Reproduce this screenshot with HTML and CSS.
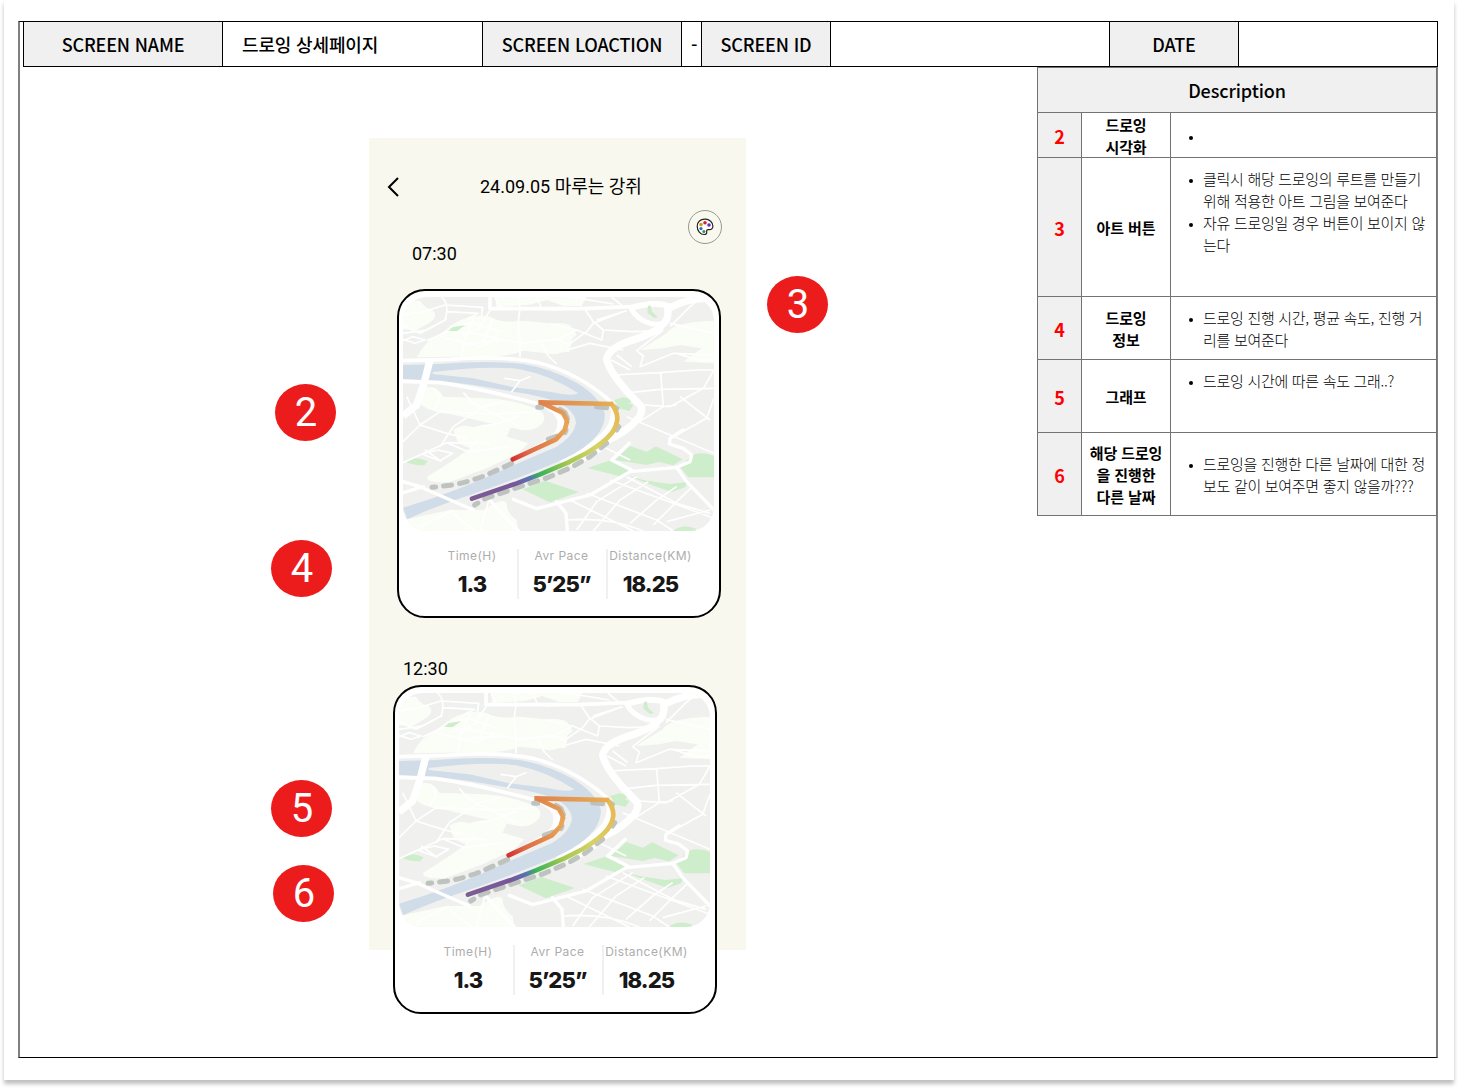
FILE: index.html
```html
<!DOCTYPE html>
<html lang="ko">
<head>
<meta charset="utf-8">
<title>드로잉 상세페이지</title>
<link rel="stylesheet" href="styles.css">
</head>
<body>
<svg class="defs" width="0" height="0" aria-hidden="true">
  <defs>
    <linearGradient id="warm" gradientUnits="userSpaceOnUse" x1="365" y1="540" x2="530" y2="460">
      <stop offset="0" stop-color="#d42f2f"/><stop offset=".3" stop-color="#dd6a45"/><stop offset="1" stop-color="#e8a458"/>
    </linearGradient>
    <linearGradient id="bend" gradientUnits="userSpaceOnUse" x1="450" y1="365" x2="530" y2="440">
      <stop offset="0" stop-color="#e0824b"/><stop offset="1" stop-color="#e8a458"/>
    </linearGradient>
    <linearGradient id="top" gradientUnits="userSpaceOnUse" x1="450" y1="0" x2="680" y2="0">
      <stop offset="0" stop-color="#e0824b"/><stop offset="1" stop-color="#e6b055"/>
    </linearGradient>
    <linearGradient id="cool" gradientUnits="userSpaceOnUse" x1="245" y1="656" x2="685" y2="410">
      <stop offset="0" stop-color="#7d5c93"/><stop offset=".27" stop-color="#76589a"/><stop offset=".36" stop-color="#5672b0"/><stop offset=".43" stop-color="#38b656"/><stop offset=".6" stop-color="#a3c84f"/><stop offset=".8" stop-color="#d6d266"/><stop offset="1" stop-color="#e6bb56"/>
    </linearGradient>
    <symbol id="map" viewBox="39 51 933 702" preserveAspectRatio="none">
      <rect x="39" y="51" width="933" height="702" fill="#f0f0ef"/>
      <g fill="#fbfef6">
        <path d="M39 62 90 62Q105 85 130 92 145 110 118 128L80 150 39 148Z"/>
        <path d="M80 232Q108 180 145 165L195 130Q240 100 300 110 330 130 400 122L480 130Q530 125 545 140L543 200Q510 230 470 220L400 212Q355 230 300 228Z"/>
        <path d="M316 51H590L575 78H520L470 60 420 74 318 82ZM480 130 540 135 560 165 530 190 540 215 480 220Z"/>
        <path d="M750 210 830 160Q850 125 972 122V250L880 245 935 205 870 195 820 205Z"/>
        <path d="M95 325Q140 310 160 350L290 355Q370 360 420 380 475 395 460 425 440 455 395 450L300 430 180 402Q110 395 90 370Z"/>
        <path d="M190 450Q220 430 250 442 290 425 365 436L350 470 415 490 385 520 290 565 180 606Q105 610 112 590 180 550 240 505L205 490Z"/>
        <path d="M39 720 180 690 280 690Q340 650 350 670 350 700 380 720L385 753H39Z"/>
      </g>
      <g fill="#ceeecb">
        <path d="m172 155 20-18 34-2-24 17-20 8ZM44 545Q70 525 113 544L103 556Q70 556 44 545ZM398 628 465 602 567 636 480 667 450 653ZM672 360 700 352 728 358 718 370 730 376 718 393 690 386ZM675 540 720 498 770 515 798 499 878 538 850 556 806 546 770 555ZM592 564 657 542 725 568 700 592ZM710 585 760 600 840 612 892 606 885 622 845 636 770 610ZM870 560 908 524Q940 514 972 528V592L895 592ZM848 753Q875 730 918 746V753Z"/>
      </g>
      <g fill="none" stroke="#fff" stroke-width="5" stroke-linejoin="round">
        <path d="M155 51Q180 75 165 120L90 160 45 140M39 105 100 95 165 75 278 82 274 108M168 95 265 100 230 118M39 160 110 150 170 118M39 182 68 170 105 180 75 190 39 178M110 182 170 155 250 160 325 175 270 200 150 170M300 92 265 145 225 165 215 232M180 140 250 128 330 155M250 115 225 180M310 115 280 188M390 90Q380 130 390 180V232M455 190 475 228 500 252M230 190 350 180 400 190 500 178 540 195M315 51 330 80M385 51 390 88M440 51 455 85"/>
        <path d="M50 350 90 435 150 395 320 402 440 395M90 435 39 485M90 435 170 460 230 475M150 500 190 440 280 380 340 365M39 548 170 488 300 490 M95 522 145 510 188 520 150 542 95 522M105 510 155 545M170 488 235 515 360 500M220 338 250 370 390 440M130 325Q165 350 130 390M240 500 265 480M280 440Q340 430 390 405"/>
        <path d="M540 51 670 72M585 88 610 125 640 150 635 180 560 150 480 132M620 120 710 92M540 190 590 155 610 130 700 95M530 210 600 190 700 210M640 150 730 155 820 152M665 51 700 80M840 130 972 160M840 140 900 80 935 51M820 150 740 212 760 228 750 260 850 220 972 225M860 220 930 242 972 240M664 240 720 270M680 225 725 260M670 285 810 278 920 270 972 270M812 278 820 380M700 340 810 328 972 325M760 375 840 380 940 325 972 270M870 350 960 420M740 430 820 380 860 375M710 410 972 520M640 500 720 540M850 470 950 415 972 355M480 90 600 84M500 180 560 150"/>
        <path d="M660 600 972 715M710 590 860 670 960 700M590 640 800 720 850 753M540 660 730 753M530 720Q660 710 760 753M560 750 620 665 740 590M610 753 690 660 775 605M720 730 800 660 860 620M790 735 860 665 905 622M830 725 960 690M300 650 270 753M190 700 255 753M90 740 190 690"/>
      </g>
      <path d="M39 255 150 252Q290 240 400 252 480 265 560 308 630 350 644 400 650 460 560 518 470 565 240 645 120 685 52 718L39 683Q200 635 360 560L500 500Q550 470 558 430 556 395 510 370 470 350 370 335L250 315 150 302 39 297Z" fill="#d0dde9"/>
      <path d="M128 276Q300 255 390 268 480 285 565 340 550 350 480 335L370 322 250 295 128 282Z" fill="#efefed"/>
      <g fill="none" stroke="#fff" stroke-linejoin="round" stroke-linecap="round">
        <path stroke-width="11" d="M39 242 180 238Q340 226 440 247 570 280 668 370M39 304 150 308Q270 325 440 370 500 385 508 425 508 465 470 490L370 535M300 51V86H580L720 80Q800 60 835 75"/>
        <path stroke-width="22" stroke-linecap="butt" d="M120 240 102 310 80 375 39 408M832 75Q840 120 815 135 805 155 720 183 655 205 650 238 660 285 745 370 765 385 745 415 710 455 655 480 620 520 540 550M835 85Q900 52 950 56"/>
        <path stroke-width="15" d="M722 84Q740 118 780 130 800 135 818 130M722 84 780 72 832 76"/>
        <path stroke-width="17" d="M480 385Q530 410 515 440 500 475 430 510M668 375Q680 425 640 465 590 515 520 548"/>
        <path stroke-width="10" d="M39 605 90 620 250 690M39 638 100 620M290 650 335 700 385 753M370 658 440 686 600 645 720 575 860 562 900 545 905 525 880 505 838 492 840 475 880 450M665 540 718 490M665 540 725 570M860 562 890 605 972 690M500 665 528 700 532 753"/>
        <path stroke-width="5" d="M345 295 390 302 420 290M390 302 365 335"/>
      </g>
      <path d="M774 78 782 76 786 95 804 112 792 114 772 98Z" fill="#ceeecb"/>
      <g fill="none" stroke="#b9beb9" stroke-opacity=".9" stroke-width="15" stroke-linecap="round" stroke-linejoin="round">
        <path stroke-dasharray="24 24" stroke-dashoffset="13" d="M126 622 180 616Q245 605 300 580L375 546"/>
        <path stroke-dasharray="24 24" stroke-dashoffset="13" d="M254 675 285 656 390 620 470 594 540 564 600 530 650 490"/>
        <path d="M443 382H455M510 388 525 398 532 415M528 450 525 458M500 468 475 478M620 380 650 383M672 380 680 385M686 440 680 450"/>
      </g>
      <g fill="none" stroke-width="14" stroke-linejoin="round">
        <path stroke="url(#warm)" stroke-linecap="round" d="M368 538 498 478 524 450 531 425"/>
        <path stroke="url(#bend)" d="M531 430 530 420 519 399 450 366"/>
        <path stroke="url(#cool)" stroke-linecap="round" d="M246 656 380 610 450 583 535 547 590 519Q640 490 665 460 682 435 682 415 682 395 665 372"/>
        <path stroke="url(#top)" d="M445 367 668 372"/>
      </g>
    </symbol>
  </defs>
</svg>

<main class="paper">
  <div class="frame">
    <header class="meta">
      <div class="key">SCREEN NAME</div><div class="val">드로잉 상세페이지</div>
      <div class="key">SCREEN LOACTION</div><div class="val dash">-</div>
      <div class="key">SCREEN ID</div><div class="val"></div>
      <div class="key">DATE</div><div class="val"></div>
    </header>

    <section class="desc">
      <h2>Description</h2>
      <div class="num">2</div><div class="name">드로잉<br>시각화</div><ul class="middle"><li></li></ul>
      <div class="num">3</div><div class="name">아트 버튼</div><ul><li>클릭시 해당 드로잉의 루트를 만들기<br>위해 적용한 아트 그림을 보여준다</li><li>자유 드로잉일 경우 버튼이 보이지 않<br>는다</li></ul>
      <div class="num">4</div><div class="name">드로잉<br>정보</div><ul><li>드로잉 진행 시간, 평균 속도, 진행 거<br>리를 보여준다</li></ul>
      <div class="num">5</div><div class="name">그래프</div><ul><li>드로잉 시간에 따른 속도 그래..?</li></ul>
      <div class="num">6</div><div class="name">해당 드로잉<br>을 진행한<br>다른 날짜</div><ul class="middle"><li>드로잉을 진행한 다른 날짜에 대한 정<br>보도 같이 보여주면 좋지 않을까???</li></ul>
    </section>
  </div>

  <section class="phone">
    <div class="nav">
      <svg class="back" viewBox="0 0 14 20"><path d="M12 1 3 10l9 9" fill="none" stroke="#000" stroke-width="2"/></svg>
      <h1>24.09.05 마루는 강쥐</h1>
    </div>
    <div class="art">
      <svg viewBox="0 0 18 18">
        <path d="M9.2 1.2C4.500 1 1.200 4 1.200 8.300c0 4.400 3.200 8.200 6.900 8.200 2 0 2.900-1.100 2.600-2.700-.2-1.500.2-2.200 1.500-2.300 3 .3 4.700-.7 4.700-3.200 0-4-3.500-7-7.700-7.100Z" fill="#fff" stroke="#222" stroke-width="1.200"/>
        <circle cx="9" cy="4.700" r="1.800" fill="#d5203c"/><circle cx="13" cy="7" r="1.800" fill="#6a2bd0"/><circle cx="5" cy="6.600" r="1.800" fill="#d99c13"/><circle cx="5" cy="10.600" r="1.600" fill="#2374b8"/><circle cx="7.900" cy="13.500" r="1.500" fill="#3b8a4e"/>
      </svg>
    </div>
    <div class="time first">07:30</div>
    <article class="card">
      <svg class="map"><use href="#map"/></svg>
      <div class="stats">
        <div><span>Time(H)</span><b>1.3</b></div>
        <div><span>Avr Pace</span><b>5’25”</b></div>
        <div><span>Distance(KM)</span><b>18.25</b></div>
      </div>
    </article>
    <div class="time second">12:30</div>
    <article class="card shifted">
      <svg class="map"><use href="#map"/></svg>
      <div class="stats">
        <div><span>Time(H)</span><b>1.3</b></div>
        <div><span>Avr Pace</span><b>5’25”</b></div>
        <div><span>Distance(KM)</span><b>18.25</b></div>
      </div>
    </article>
  </section>

  <div class="badge b2">2</div>
  <div class="badge b3">3</div>
  <div class="badge b4">4</div>
  <div class="badge b5">5</div>
  <div class="badge b6">6</div>
</main>
</body>
</html>
```

FILE: styles.css
```css
* { box-sizing: border-box; }
body {
  margin: 0;
  width: 1458px;
  height: 1088px;
  overflow: hidden;
  background: #fff;
  color: #000;
  font-family: "Noto Sans CJK KR", sans-serif;
}
.defs { position: absolute; }
.paper {
  position: relative;
  width: 1450px;
  height: 1080px;
  margin: 0 4px;
  padding: 21px 16px 22px 14px;
  background: #fff;
  box-shadow: 0 4px 4px rgba(0, 0, 0, .25);
}
.frame {
  height: 1037px;
  display: flex;
  flex-direction: column;
  align-items: flex-end;
  border: solid #000;
  border-width: 1px 2px;
  border-color: #000 #808080;
}

/* header strip */
.meta {
  display: grid;
  grid-template-columns: 199px 260px 199px 20px 129px 279px 129px 199px;
  width: 1415px;
  height: 46px;
  flex: none;
  margin: -1px -2px 0 0;
  border: solid #000;
  border-width: 1px 1px 1px 0;
  font-size: 18px;
  font-weight: 500;
  line-height: 44px;
  letter-spacing: -.15px;
  white-space: nowrap;
}
.meta > div { border-left: 1px solid #000; height: 44px; }
.key { background: #f0f0f0; text-align: center; }
.val { background: #fff; padding-left: 19px; }
.val.dash { padding-left: 9px; }

/* description table */
.desc {
  display: grid;
  grid-template-columns: 44px 89px 266px;
  grid-template-rows: 45px 45px 139px 63px 73px 83px;
  width: 400px;
  margin-right: -1px;
  border-right: 1px solid #737373;
  border-bottom: 1px solid #737373;
}
.desc > * { border-top: 1px solid #737373; border-left: 1px solid #737373; margin: 0; }
.desc h2 {
  grid-column: 1 / -1;
  background: #f0f0f0;
  font-size: 18px;
  font-weight: 500;
  line-height: 44px;
  letter-spacing: -.1px;
  text-align: center;
}
.num, .name { display: flex; align-items: center; justify-content: center; text-align: center; }
.num { background: #f0f0f0; color: #f00; font-size: 18px; font-weight: 700; padding-top: 1px; }
.name { font-size: 15px; font-weight: 700; line-height: 22px; padding-top: 1px; letter-spacing: -.1px; white-space: nowrap; }
.desc ul {
  display: flex;
  flex-direction: column;
  padding: 10px 0 0 32px;
  font-size: 15px;
  font-weight: 300;
  line-height: 22px;
  letter-spacing: -.3px;
  white-space: nowrap;
}
.desc ul.middle { justify-content: center; padding-top: 2px; }
.desc li { display: block; position: relative; min-height: 22px; }
.desc li::before {
  content: "";
  position: absolute;
  left: -14px;
  top: 11px;
  width: 4px;
  height: 4px;
  border-radius: 50%;
  background: #000;
}

/* phone mock-up */
.phone {
  position: absolute;
  left: 365px;
  top: 138px;
  width: 377px;
  height: 812px;
  padding-left: 28px;
  background: #f8f8ee;
}
.nav { display: flex; align-items: center; height: 72px; padding-top: 25px; margin-left: -11px; }
.back { width: 14px; height: 20px; }
.nav h1 {
  margin: 0 0 0 80px;
  font: 400 18px/26px Roboto, "Noto Sans CJK KR", sans-serif;
  white-space: nowrap;
}
.art {
  display: flex;
  align-items: center;
  justify-content: center;
  width: 34px;
  height: 34px;
  margin-left: 291px;
  border: 1px solid #99998f;
  border-radius: 50%;
}
.art svg { width: 18px; height: 18px; }
.time { font: 400 18px/20px Roboto, sans-serif; }
.first { margin: 0 0 25px 15px; }
.second { margin: 41px 0 6px 6px; }
.card {
  width: 324px;
  height: 329px;
  padding: 6px 0 0 4px;
  border: 2px solid #000;
  border-radius: 28px;
  background: #fff;
}
.shifted { margin-left: -4px; }
.map { display: block; width: 311px; height: 234px; border-radius: 24px; }
.stats { display: grid; grid-template-columns: 90px 89px 89px; margin: 18px 0 0 24px; height: 50px; }
.stats div { display: flex; flex-direction: column; align-items: center; white-space: nowrap; }
.stats div + div { border-left: 2px solid #f0f0f0; padding-right: 2px; }
.stats span { font: 400 12px/14px Inter, sans-serif; color: #adadad; letter-spacing: .45px; }
.stats b { font: 800 22px/26px Inter, sans-serif; color: #171717; letter-spacing: -.9px; margin-top: 8px; }

/* numbered callouts */
.badge {
  position: absolute;
  width: 61px;
  height: 57px;
  padding-left: 1px;
  border-radius: 50%;
  background: #ec1c1c;
  color: #fff;
  font: 400 40px/57px Roboto, sans-serif;
  text-align: center;
}
.b2 { left: 271px; top: 384px; }
.b3 { left: 763px; top: 276px; }
.b4 { left: 267px; top: 540px; }
.b5 { left: 267px; top: 780px; }
.b6 { left: 269px; top: 865px; }
```
